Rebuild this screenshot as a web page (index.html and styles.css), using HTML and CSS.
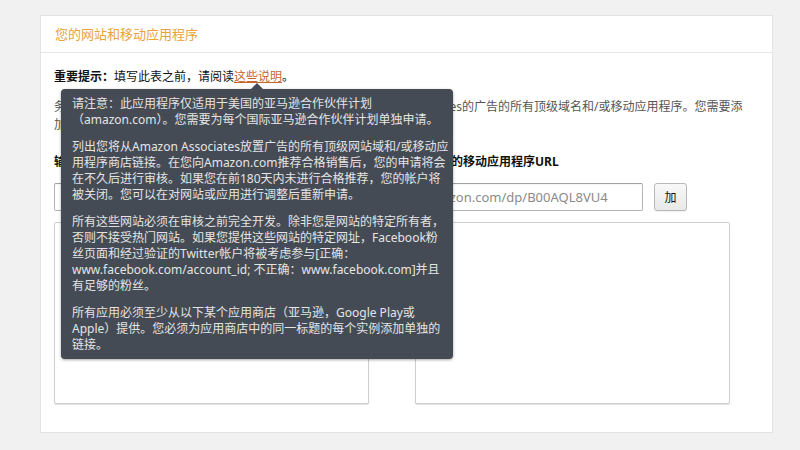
FILE: index.html
```html
<!DOCTYPE html>
<html lang="zh-CN">
<head>
    <meta charset="UTF-8">
    <meta name="viewport" content="width=device-width, initial-scale=1.0">
    <title>您的网站和移动应用程序</title>
    <link rel="stylesheet" href="styles.css">
</head>
<body>
    <div class="card">
        <div class="card-header">
            <h2>您的网站和移动应用程序</h2>
        </div>
        <div class="card-body">
            <p class="notice"><strong>重要提示：</strong>填写此表之前，请阅读<a href="#" class="help-link">这些说明</a>。</p>
            <p class="desc">务必列出您的网站和移动应用程序，包括您将要放置来自Amazon Associates的广告的所有顶级域名和/或移动应用程序。您需要添加至少一个网站或移动应用程序。</p>

            <div class="columns">
                <div class="column">
                    <label for="siteUrl">输入您的网站URL</label>
                    <div class="add-row">
                        <input type="text" id="siteUrl" placeholder="www.example.com">
                        <button type="button">加</button>
                    </div>
                    <textarea readonly></textarea>
                </div>
                <div class="column">
                    <label for="appUrl">输入您的移动应用程序URL</label>
                    <div class="add-row">
                        <input type="text" id="appUrl" placeholder="amazon.com/dp/B00AQL8VU4">
                        <button type="button">加</button>
                    </div>
                    <textarea readonly></textarea>
                </div>
            </div>

            <!-- help popover for the "这些说明" link -->
            <div class="popover">
                <p>请注意：此应用程序仅适用于美国的亚马逊合作伙伴计划（amazon.com）。您需要为每个国际亚马逊合作伙伴计划单独申请。</p>
                <p>列出您将从Amazon Associates放置广告的所有顶级网站域和/或移动应用程序商店链接。在您向Amazon.com推荐合格销售后，您的申请将会在不久后进行审核。如果您在前180天内未进行合格推荐，您的帐户将被关闭。您可以在对网站或应用进行调整后重新申请。</p>
                <p>所有这些网站必须在审核之前完全开发。除非您是网站的特定所有者，否则不接受热门网站。如果您提供这些网站的特定网址，Facebook粉丝页面和经过验证的Twitter帐户将被考虑参与[正确：www.facebook.com/account_id; 不正确：www.facebook.com]并且有足够的粉丝。</p>
                <p>所有应用必须至少从以下某个应用商店（亚马逊，Google Play或Apple）提供。您必须为应用商店中的同一标题的每个实例添加单独的链接。</p>
            </div>
        </div>
    </div>
</body>
</html>
```

FILE: styles.css
```css
body {
    font-family: "Noto Sans", "Noto Sans CJK SC", sans-serif;
    font-size: 12px;
    line-height: 18px;
    background-color: #f1f1f1;
    color: #111;
    margin: 0;
    padding: 15px 27px 17px 40px;
}

*,
*::before,
*::after {
    box-sizing: border-box;
}

.card {
    background: #fff;
    border: 1px solid #e4e4e4;
    height: 418px;
}

.card-header {
    height: 37px;
    padding: 0 14px;
    border-bottom: 1px solid #e7e7e7;
    display: flex;
    align-items: center;
}

.card-header h2 {
    margin: 0;
    font-size: 13px;
    font-weight: normal;
    color: #eaa23a;
}

.card-body {
    position: relative;
    padding: 15px 20px 30px 13px;
}

.notice {
    margin: 0;
}

.help-link {
    color: #c8652a;
    text-decoration: underline;
}

.desc {
    margin: 12px 0 0;
    color: #555;
}

.columns {
    display: grid;
    grid-template-columns: 315px 315px;
    column-gap: 46px;
    margin-top: 19px;
}

.column label {
    display: block;
    font-weight: bold;
}

.add-row {
    display: flex;
    gap: 11px;
    margin-top: 12px;
}

input[type="text"] {
    width: 228px;
    height: 28px;
    padding: 0 7px;
    border: 1px solid #b4b4b4;
    border-top-color: #a0a0a0;
    border-radius: 2px;
    font-family: inherit;
    font-size: 13px;
    color: #111;
    box-shadow: inset 0 1px 0 rgba(0, 0, 0, 0.04);
}

input::placeholder {
    color: #8a8a8a;
}

button {
    width: 33px;
    height: 28px;
    padding: 0;
    border: 1px solid #b7b9bd;
    border-radius: 3px;
    background: linear-gradient(#f8f8f8, #e8e8e8);
    font-family: inherit;
    font-size: 12px;
    color: #111;
    box-shadow: 0 1px 0 rgba(0, 0, 0, 0.06);
}

textarea {
    display: block;
    width: 315px;
    height: 182px;
    margin-top: 11px;
    border: 1px solid #cfcfcf;
    border-radius: 2px;
    box-shadow: 0 1px 1px rgba(0, 0, 0, 0.12);
    resize: none;
    font-family: inherit;
}

.popover {
    position: absolute;
    top: 36px;
    left: 20px;
    width: 392px;
    padding: 7px 4px 6px 11px;
    background: #444b55;
    color: #e4e4e4;
    font-size: 12px;
    line-height: 16px;
    border-radius: 4px;
    box-shadow: 0 1px 3px rgba(0, 0, 0, 0.35);
}

.popover::before {
    content: "";
    position: absolute;
    top: -6px;
    left: 190px;
    border-left: 6px solid transparent;
    border-right: 6px solid transparent;
    border-bottom: 6px solid #444b55;
}

.popover p {
    margin: 0 0 11px;
}

.popover p:last-child {
    margin-bottom: 0;
}
```
